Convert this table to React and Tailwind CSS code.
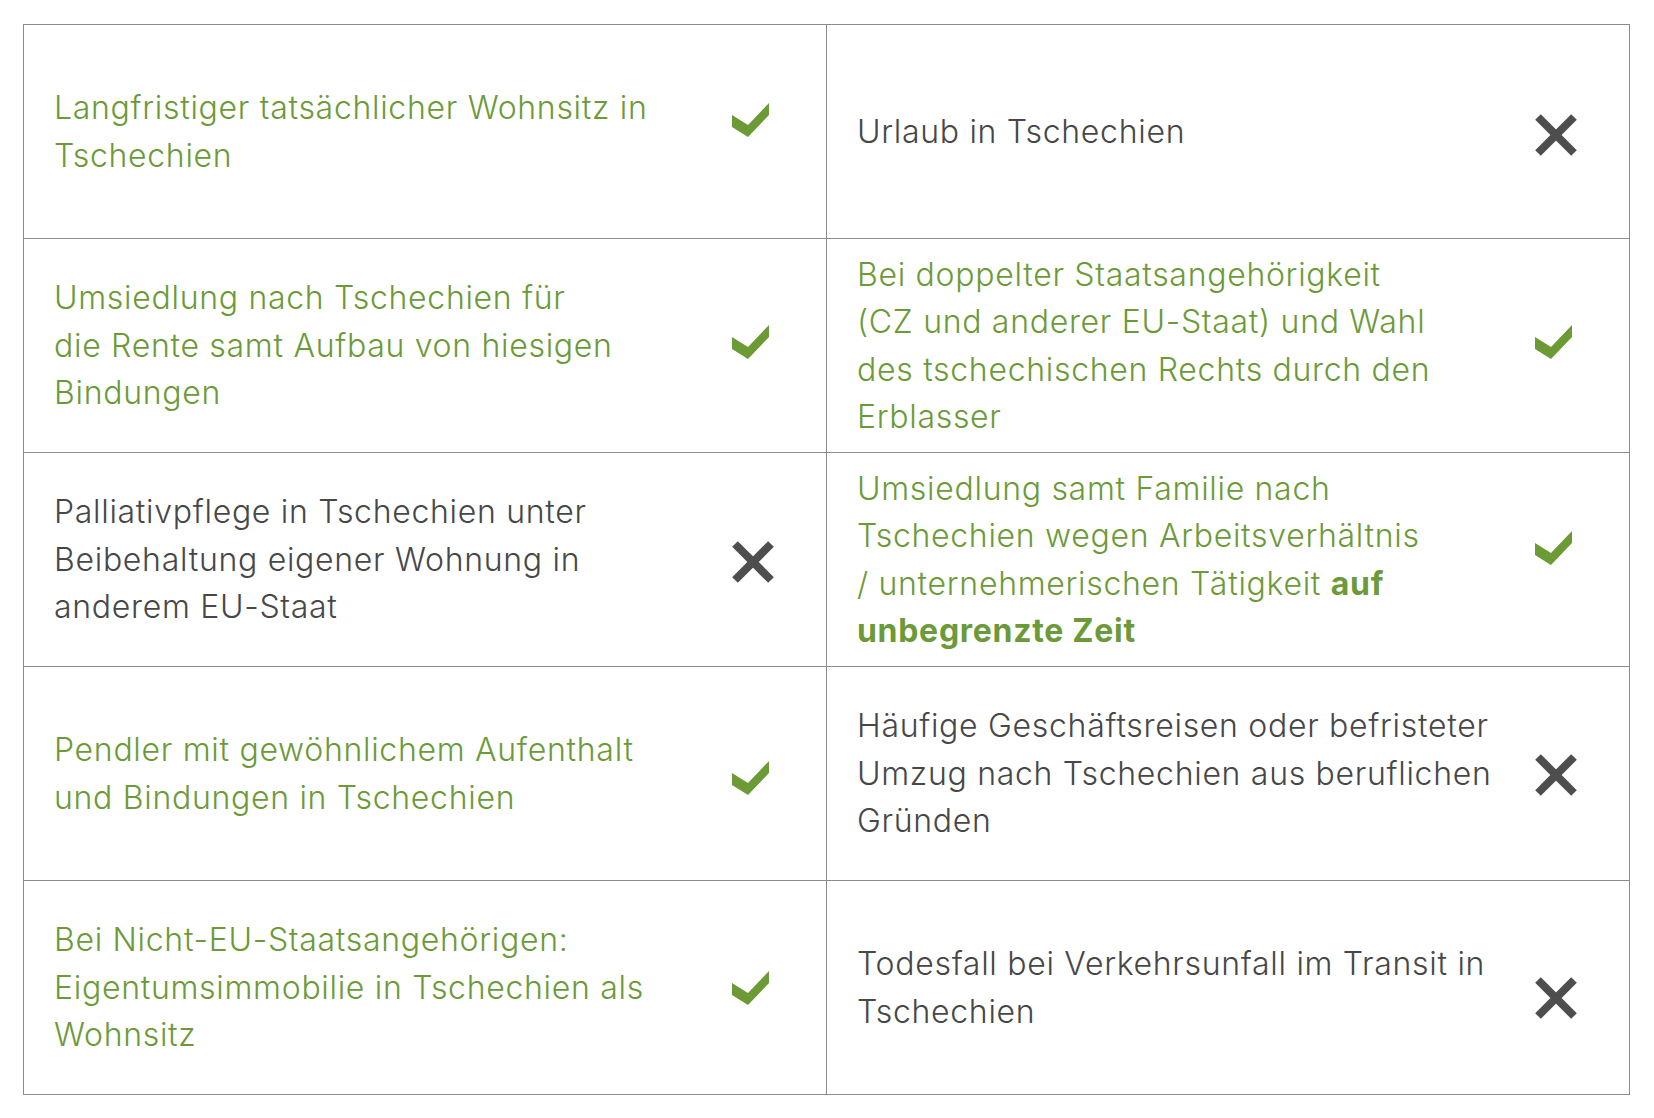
import React from 'react';

const Check = () => (
  <svg width="37" height="34" viewBox="0 0 37 34" className="block">
    <polygon points="0,12 16,22 37,0 37,12 16,34 0,24" fill="#6c9a34" />
  </svg>
);

const Cross = () => (
  <svg width="42" height="42" viewBox="0 0 42 42" className="block">
    <g stroke="#4e4e4e" strokeWidth="8" strokeLinecap="butt">
      <line x1="3" y1="3" x2="39" y2="39" />
      <line x1="39" y1="3" x2="3" y2="39" />
    </g>
  </svg>
);

// one table cell: text on the left, verdict icon on the right
function Cell({ ok, lines, shift = '' }) {
  return (
    <div className="flex items-center h-[214px] border-r border-b border-[#8c8c8c] pl-[30px] pr-[50px]">
      <div
        className={`flex-1 whitespace-nowrap text-[32px] font-light leading-[47.5px] tracking-[0.7px] ${
          ok ? 'text-[#6c9a38]' : 'text-[#474747]'
        }`}
      >
        {lines.map((l, i) => (
          <div key={i}>{l}</div>
        ))}
      </div>
      <div className={`w-[44px] ${shift}`}>{ok ? <Check /> : <Cross />}</div>
    </div>
  );
}

const rows = [
  [
    { ok: true, lines: ['Langfristiger tatsächlicher Wohnsitz in', 'Tschechien'], shift: 'mb-[24px]' },
    { ok: false, lines: ['Urlaub in Tschechien'], shift: 'mt-[6px]' },
  ],
  [
    {
      ok: true,
      lines: ['Umsiedlung nach Tschechien für', 'die Rente samt Aufbau von hiesigen', 'Bindungen'],
      shift: 'mb-[8px]',
    },
    {
      ok: true,
      lines: [
        'Bei doppelter Staatsangehörigkeit',
        '(CZ und anderer EU-Staat) und Wahl',
        'des tschechischen Rechts durch den',
        'Erblasser',
      ],
      shift: 'mb-[8px]',
    },
  ],
  [
    {
      ok: false,
      lines: ['Palliativpflege in Tschechien unter', 'Beibehaltung eigener Wohnung in', 'anderem EU-Staat'],
      shift: 'mt-[4px]',
    },
    {
      ok: true,
      lines: [
        'Umsiedlung samt Familie nach',
        'Tschechien wegen Arbeitsverhältnis',
        <>
          / unternehmerischen Tätigkeit <b className="font-bold">auf</b>
        </>,
        <b className="font-bold">unbegrenzte Zeit</b>,
      ],
      shift: 'mb-[24px]',
    },
  ],
  [
    { ok: true, lines: ['Pendler mit gewöhnlichem Aufenthalt', 'und Bindungen in Tschechien'], shift: 'mt-[9px]' },
    {
      ok: false,
      lines: ['Häufige Geschäftsreisen oder befristeter', 'Umzug nach Tschechien aus beruflichen', 'Gründen'],
      shift: 'mt-[3px]',
    },
  ],
  [
    {
      ok: true,
      lines: ['Bei Nicht-EU-Staatsangehörigen:', 'Eigentumsimmobilie in Tschechien als', 'Wohnsitz'],
    },
    { ok: false, lines: ['Todesfall bei Verkehrsunfall im Transit in', 'Tschechien'], shift: 'mt-[20px]' },
  ],
];

export default function App() {
  return (
    <div className="min-h-screen bg-white pt-[24px] pl-[23px]" style={{ fontFamily: 'Inter, "Noto Sans", sans-serif' }}>
      <div className="grid grid-cols-[803px_803px] w-[1607px] border-l border-t border-[#8c8c8c]">
        {rows.flat().map((c, i) => (
          <Cell key={i} {...c} />
        ))}
      </div>
    </div>
  );
}
